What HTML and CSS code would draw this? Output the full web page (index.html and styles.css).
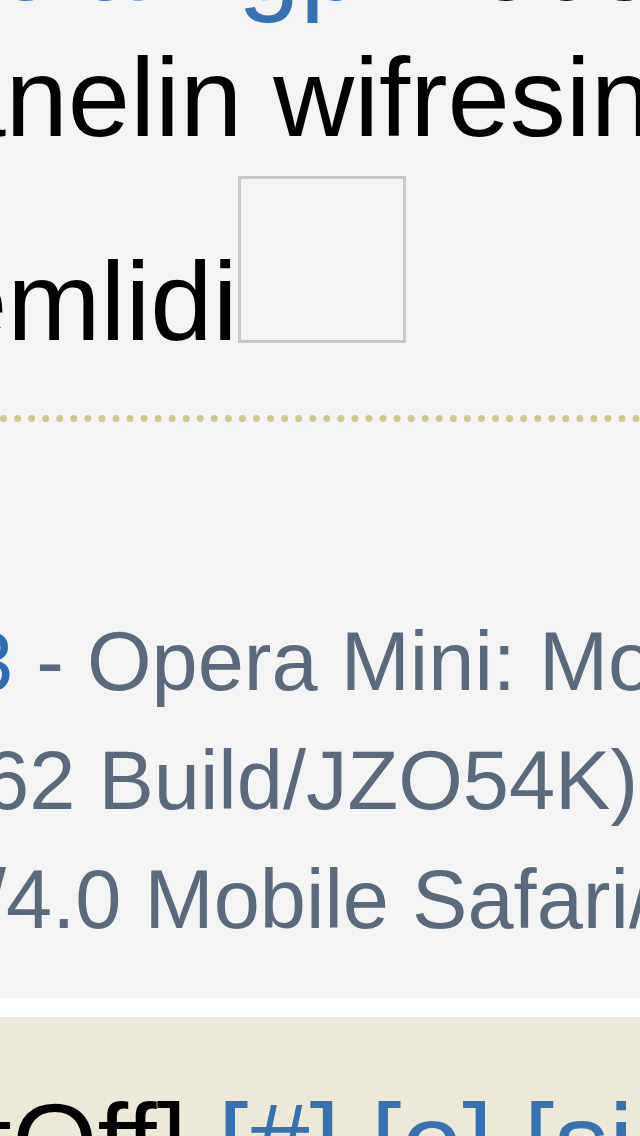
FILE: index.html
```html
<!DOCTYPE html>
<html lang="az">
<head>
    <meta charset="UTF-8">
    <meta name="viewport" content="width=device-width, initial-scale=1.0">
    <title>Chat</title>
    <link rel="stylesheet" href="styles.css">
</head>
<body>
    <div class="page">
        <div class="post">
            <div class="msg">
                <div class="line l1"><a class="nick" href="#">olaZigp</a> Necese bilmek</div>
                <div class="line l2">panelin wifresini</div>
                <div class="line l3">emlidi<span class="check"></span></div>
            </div>
            <div class="info">
                <div class="row r1"><a class="num" href="#">3</a> - Opera Mini: Mozilla/5.0 (Linux; U; Android</div>
                <div class="row r2">62 Build/JZO54K) AppleWebKit/534.30</div>
                <div class="row r3">/4.0 Mobile Safari/534.30</div>
            </div>
        </div>
        <div class="foot">
            <span class="off">[ChatOff]</span> <a href="#">[#]</a> <a href="#">[o]</a> <a href="#">[sil]</a>
        </div>
    </div>
</body>
</html>
```

FILE: styles.css
```css
body {
    margin: 0;
    background: #fff;
    font-family: "Liberation Sans", Arial, sans-serif;
}
.page {
    height: 1136px;
    overflow: hidden;
}
a {
    color: #3672b3;
    text-decoration: none;
}
.post {
    background: #f4f4f4;
    margin-top: -106px;
}
.line, .row, .foot {
    white-space: nowrap;
    overflow: hidden;
}
.msg {
    font-size: 112px;
    line-height: 136px;
    color: #000;
    padding-bottom: 45px;
    border-bottom: 7px dotted #cfc98e;
}
.l1 { text-indent: -5px; }
.l2 { text-indent: -119px; }
.l3 { text-indent: -55px; }
.check {
    display: inline-block;
    box-sizing: border-box;
    width: 168px;
    height: 167px;
    margin: 10px 0 1px 0;
    border: 3px solid #c9c9c9;
    background: #f4f4f4;
    vertical-align: -4px;
}
.info {
    font-size: 83px;
    line-height: 119px;
    color: #5a6a7c;
    padding: 180px 0 39px;
}
.num { color: #2f6db3; }
.r1 { text-indent: -33px; }
.r2 { text-indent: -17px; }
.r3 { text-indent: -17px; }
.foot {
    margin-top: 19px;
    background: #ede9d8;
    font-size: 110px;
    line-height: 132px;
    padding-top: 59px;
    height: 400px;
    text-indent: -251px;
}
.off { color: #000; }
```
